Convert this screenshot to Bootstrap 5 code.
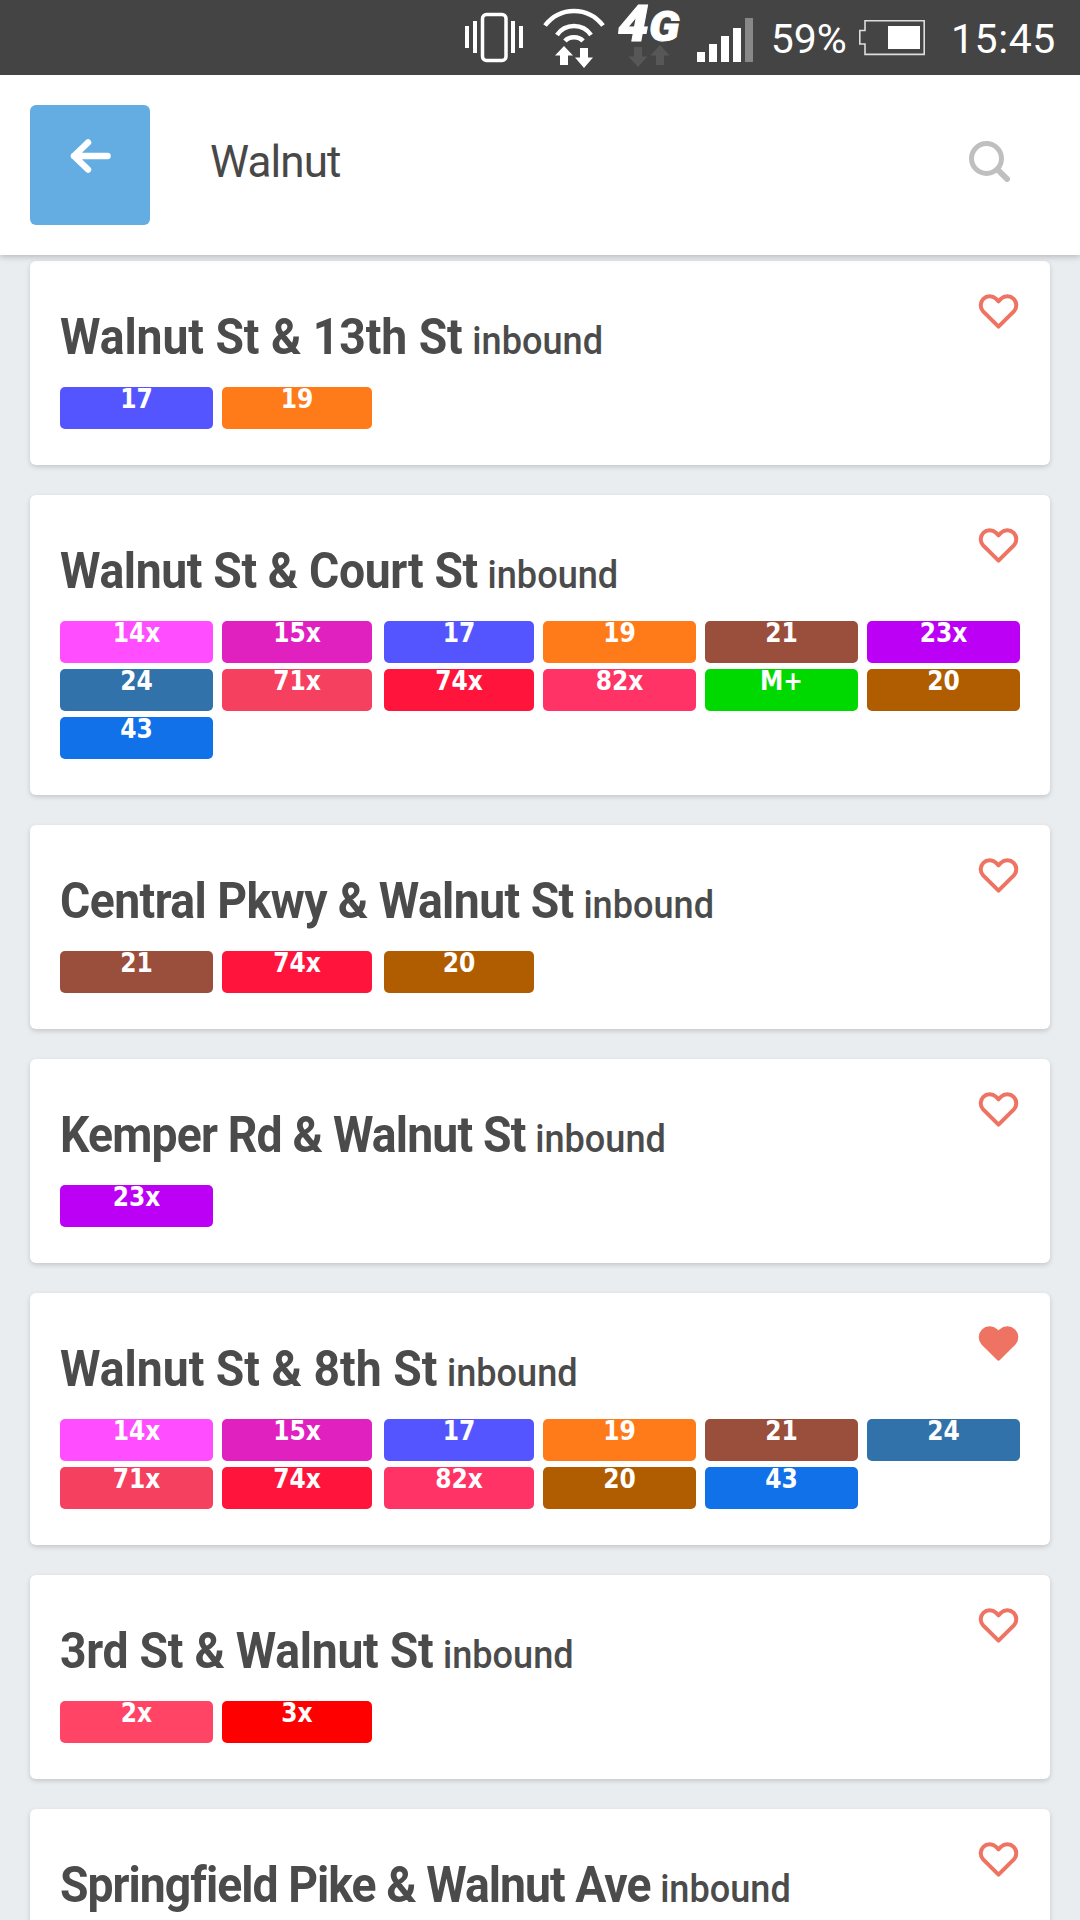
<!doctype html>
<html lang="en"><head><meta charset="utf-8">
<link href="https://cdn.jsdelivr.net/npm/bootstrap@5.3.0/dist/css/bootstrap.min.css" rel="stylesheet">
<style>
html,body{height:1920px;overflow:hidden}
body{background:#eaedf0;color:#484848;font-family:"Roboto",sans-serif}
.stat-bar{height:75px;background:#444;color:#fff;padding-right:24px;position:relative;z-index:3}
.stat-bar svg{height:75px;display:block;flex:none}
.stat-txt{font-size:41px;line-height:79px;font-weight:400;white-space:nowrap}
.gap-vib{margin-right:20px}.gap-wifi{margin-right:13px}.gap-sig{margin-right:18px}.gap-pct{margin-right:12px}.gap-bat{margin-right:26px}
.time-txt{letter-spacing:.6px}
.net-box{width:64px;margin-right:15px;position:relative;flex:none}
.net-type{display:block;font:italic 900 50px/48px "Roboto",sans-serif;-webkit-text-stroke:1px #fff;white-space:nowrap;transform:scaleX(1.1);transform-origin:left center}
.net-type span{font-size:42px}
.net-box svg{position:absolute;left:0;top:0}
.top-head{height:180px;background:#fff;padding:30px 30px;box-shadow:0 2px 6px rgba(0,0,0,.22);position:relative;z-index:2}
.back-btn{width:120px;height:120px;background:#63ade2;border:0;border-radius:6px;padding:0 0 18px}
.query{font-size:44px;letter-spacing:-.9px;margin-left:60px;color:#484848;margin-bottom:6px}
.find-ico{margin-right:40px;margin-bottom:7px}
.stop-list{padding:6px 30px 0;display:flex;flex-direction:column;gap:30px}
.stop-card{border:0;border-radius:6px;box-shadow:0 2px 5px rgba(0,0,0,.16);padding:46px 30px 36px;position:relative}
.stop-name{font-weight:700;font-size:50px;line-height:60px;margin:0 0 20px;color:#4b4b4b;white-space:nowrap;transform:scaleX(.926);transform-origin:left center}
.stop-dir{font-size:39px;font-weight:500;line-height:1;letter-spacing:0;margin-left:-2px}
.heart{position:absolute;top:33px;right:31px;width:41px;height:36px}
.routes{display:grid;grid-template-columns:153px 153px 150px 153px 153px 153px;column-gap:9px;row-gap:6px}
.route{height:42px;border-radius:5px;color:#fff;font:700 26px/24px "DejaVu Sans Condensed","DejaVu Sans",sans-serif;text-align:center}
.route:nth-child(6n+2){width:150px}
.lastcut{height:300px}
</style></head><body>
<div class="stat-bar d-flex justify-content-end">
 <svg width="58" viewBox="463 0 58 75" class="gap-vib"><rect x="480.500" y="14.500" width="23.500" height="46" rx="4" fill="none" stroke="#fff" stroke-width="3.500"/><path d="M465 26v22M473 21v32M511 21v32M519 26v22" stroke="#fff" stroke-width="4"/></svg>
 <svg width="62" viewBox="541 0 62 75" class="gap-wifi"><g fill="none" stroke="#fff" stroke-width="4.500"><path d="M543 25.500C558 6 586 6 601 25.500"/><path d="M555 35C563 23 581 23 589 35"/><path d="M563 41C567 36 577 36 581 41"/></g><path d="M562 46l9 9.500h-5V65h-8v-9.500h-5zM582 68l-9-10.500h5V48h8v9.500h5z" fill="#fff"/></svg>
 <div class="net-box"><span class="net-type">4<span>G</span></span><svg width="64" viewBox="617 0 64 75"><path d="M637 67l-9.500-10.500h5.500V47h8v9.500h5.500zM659 45l9.500 10.500H663V65h-8v-9.500h-5.500z" fill="#575757"/></svg></div>
 <svg width="56" viewBox="696 0 56 75" class="gap-sig"><path d="M696 52h8v10h-8zM708 44h8v18h-8zM720 36h8v26h-8zM732 28h8v34h-8z" fill="#fff"/><path d="M744 18h8v44h-8z" fill="#888"/></svg>
 <span class="stat-txt gap-pct">59%</span>
 <svg width="66" viewBox="858 0 66 75" class="gap-bat"><path d="M864 20.800h59.200v33.600H864V44h-5.200V30.500H864z" fill="none" stroke="#ddd" stroke-width="1.600"/><rect x="887" y="26" width="32" height="23" fill="#fff"/></svg>
 <span class="stat-txt time-txt">15:45</span>
</div>
<header class="top-head d-flex align-items-center">
 <button class="back-btn d-flex align-items-center justify-content-center" aria-label="Back"><svg width="41" height="34" viewBox="0 0 41 34"><path d="M18 3.500L4 17l14 13.500M4 17h33.500" fill="none" stroke="#fff" stroke-width="6.500" stroke-linecap="round" stroke-linejoin="round"/></svg></button>
 <div class="query flex-grow-1">Walnut</div>
 <svg width="41" height="41" viewBox="0 0 41 41" class="find-ico"><circle cx="17.500" cy="17.500" r="15" fill="none" stroke="#bfbfbf" stroke-width="5"/><path d="M28.500 28.500l9.500 9.500" stroke="#bfbfbf" stroke-width="6" stroke-linecap="round"/></svg>
</header>
<main class="stop-list" id="list"></main>
<script>
const C={'14x':'#ff4dff','15x':'#e020bf','17':'#5555ff','19':'#ff7b1a','21':'#9a4f3c','23x':'#bb00f5','24':'#3072a9','71x':'#f5405f','74x':'#ff143c','82x':'#ff3366','M+':'#00d900','20':'#b05c00','43':'#1071e8','2x':'#ff4466','3x':'#ff0000'};
const S=[['Walnut St &amp; 13th St',['17','19'],0,-.07],['Walnut St &amp; Court St',['14x','15x','17','19','21','23x','24','71x','74x','82x','M+','20','43'],0,-.4],['Central Pkwy &amp; Walnut St',['21','74x','20'],0,-.6],['Kemper Rd &amp; Walnut St',['23x'],0,-.88],['Walnut St &amp; 8th St',['14x','15x','17','19','21','24','71x','74x','82x','20','43'],1,0],['3rd St &amp; Walnut St',['2x','3x'],0,-.3],['Springfield Pike &amp; Walnut Ave',[],0,-1.05]];
const H='M20.500 32.700L5.140 17.360A9 9 0 0 1 17.860 4.640L20.500 7.280L23.140 4.640A9 9 0 0 1 35.860 17.360Z';
document.getElementById('list').innerHTML=S.map(s=>`<article class="card stop-card${s[1].length?'':' lastcut'}"><svg class="heart" viewBox="0 0 41 36"><path d="${H}" fill="${s[2]?'#ef7362':'none'}" stroke="#ef7362" stroke-width="4" stroke-linejoin="round"/></svg><h2 class="stop-name"><span style="letter-spacing:${s[3]}px">${s[0]}</span> <span class="stop-dir">inbound</span></h2><div class="routes">${s[1].map(r=>`<div class="route" style="background:${C[r]}">${r}</div>`).join('')}</div></article>`).join('');
</script>
<script src="https://cdn.jsdelivr.net/npm/bootstrap@5.3.0/dist/js/bootstrap.bundle.min.js"></script>
</body></html>
